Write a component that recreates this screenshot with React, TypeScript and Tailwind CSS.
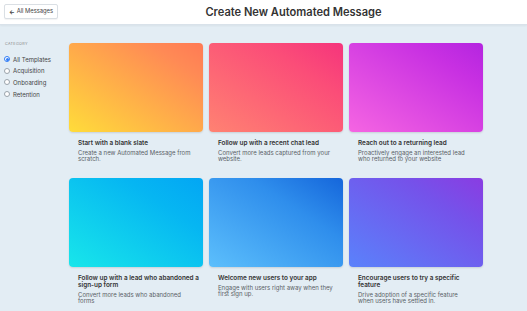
import React from "react";

const cards = [
  { title: "Start with a blank slate", desc: "Create a new Automated Message from scratch.", grad: "bg-[linear-gradient(to_top_right,#ffdc3a,#ff8a55_80%,#ff7a55)]" },
  { title: "Follow up with a recent chat lead", desc: "Convert more leads captured from your website.", grad: "bg-[linear-gradient(to_top_right,#ff8272,#fb4d78_70%,#f5347c)]" },
  { title: "Reach out to a returning lead", desc: "Proactively engage an interested lead who returned to your website", grad: "bg-[linear-gradient(to_top_right,#f565e2,#c830e2_75%,#b425e0)]" },
  { title: "Follow up with a lead who abandoned a sign-up form", desc: "Convert more leads who abandoned forms", grad: "bg-[linear-gradient(to_top_right,#18e6ea,#06b6f2_70%,#03a6f4)]" },
  { title: "Welcome new users to your app", desc: "Engage with users right away when they first sign up.", grad: "bg-[linear-gradient(to_top_right,#5cbffc,#2f8eec_65%,#1566db)]" },
  { title: "Encourage users to try a specific feature", desc: "Drive adoption of a specific feature when users have settled in.", grad: "bg-[linear-gradient(to_top_right,#5a82fb,#7552ea_70%,#8a3ce2)]" },
];

const cats = ["All Templates", "Acquisition", "Onboarding", "Retention"];

export default function App() {
  return (
    <div className="w-[527px] h-[311px] overflow-hidden bg-[#e3edf4] text-[#333] font-['Inter',sans-serif]">
      <div className="h-[25px] bg-white border-b border-[#d9e2ea] shadow-[0_1px_2px_rgba(0,0,0,0.05)] relative flex items-center">
        <button className="ml-[4px] mt-[-1px] h-[15px] w-[54px] border border-[#dadfe4] rounded-[2px] bg-white text-[5.8px] text-[#444] flex items-center justify-center gap-[2px] shadow-[0_1px_1px_rgba(0,0,0,0.05)]">
          <span className="text-[6px] leading-none font-bold">←</span>
          <span>All Messages</span>
        </button>
        <div className="absolute left-0 right-0 top-0 h-[25px] flex items-center justify-center pointer-events-none">
          <span className="ml-[60px] text-[11.1px] font-semibold text-[#333]">Create New Automated Message</span>
        </div>
      </div>
      <div className="flex">
        <div className="w-[69px] pl-[4px] pt-[16px]">
          <div className="pl-[1px] text-[3.8px] tracking-[0.3px] text-[#888] uppercase mb-[9px]">Category</div>
          <div className="flex flex-col gap-[5px]">
            {cats.map((c, i) => (
              <div key={c} className="flex items-center gap-[3px] h-[6.7px]">
                {i === 0 ? (
                  <span className="w-[6px] h-[6px] rounded-full bg-white border border-[#2f7cf6] flex items-center justify-center">
                    <span className="w-[3px] h-[3px] rounded-full bg-[#2f7cf6]" />
                  </span>
                ) : (
                  <span className="w-[6px] h-[6px] rounded-full bg-white border border-[#9aa3ab]" />
                )}
                <span className="text-[6px] text-[#444]">{c}</span>
              </div>
            ))}
          </div>
        </div>
        <div className="pt-[18px] grid grid-cols-[134px_134px_134px] gap-x-[6px] gap-y-[0px]">
          {cards.map((c) => (
            <div key={c.title} className="h-[135px]">
              <div className={`h-[89px] rounded-[4px] shadow-[0_1px_2px_rgba(0,0,0,0.12)] ${c.grad}`} />
              <div className="pl-[9px] pr-[4px] pt-[8px]">
                <div className="text-[6.4px] font-semibold leading-[7px] text-[#333]">{c.title}</div>
                <div className="mt-[3px] text-[6px] leading-[6px] text-[#5a5f66] pr-[6px]">{c.desc}</div>
              </div>
            </div>
          ))}
        </div>
      </div>
    </div>
  );
}
